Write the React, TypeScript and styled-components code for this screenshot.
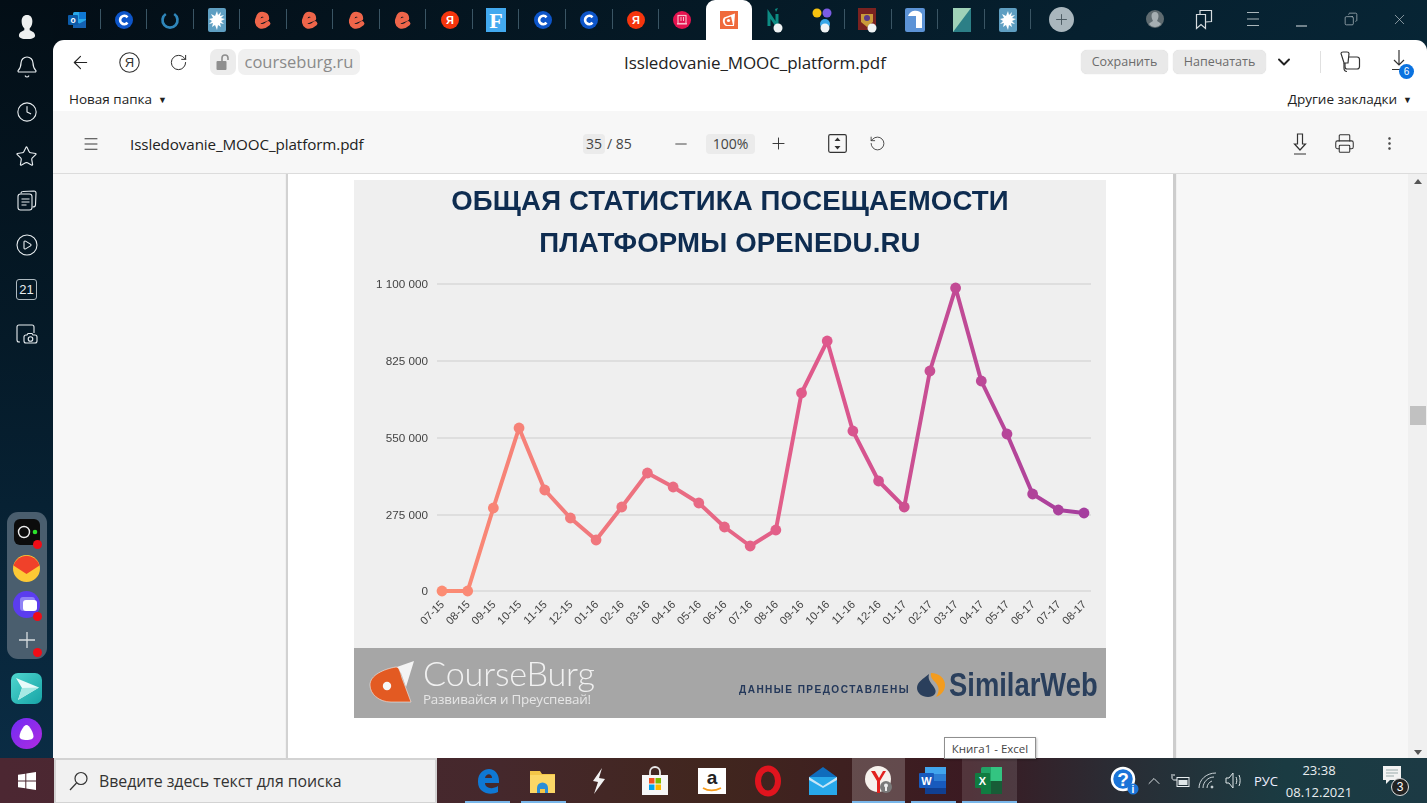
import React from "react";
import styled, { createGlobalStyle } from "styled-components";
import {
  ArrowLeft, Bell, ChevronDown, ChevronUp, CirclePlay, Clock, Copy, Menu, Minus, MoreVertical,
  Plus, Printer, RotateCcw, RotateCw, Star, X,
} from "lucide-react";

const Global = createGlobalStyle`
  html, body { margin: 0; padding: 0; width: 1427px; height: 803px; overflow: hidden; }
  body { font-family: "Open Sans", "Noto Sans", "Liberation Sans", sans-serif; color: #222; }
  svg { display: block; flex: none; overflow: visible; }
`;

const Desktop = styled.div`
  position: relative; width: 1427px; height: 803px; display: flex; flex-direction: column; overflow: hidden;
`;
const Upper = styled.div`
  height: 758px; flex: none; display: flex;
  background: linear-gradient(145deg, #030d15 0%, #06202f 45%, #0b3446 100%);
`;
const Sidebar = styled.aside`
  width: 53px; flex: none; display: flex; flex-direction: column; align-items: center;
  padding-top: 7px; box-sizing: border-box; color: #e8edf0;
  background: linear-gradient(180deg, #030e16 0%, #051a28 45%, #0a2c44 100%);
`;
const Avatar = styled.div`height: 38px; padding-top: 2px; box-sizing: border-box; display: flex; align-items: center; justify-content: center;`;
const RailButton = styled.div`
  width: 53px; height: 44.5px; flex: none; display: flex; align-items: center; justify-content: center;
`;
const RailDate = styled.div`
  width: 19px; height: 19px; border: 1px solid #aeb9c0; border-radius: 3px;
  font-size: 13px; line-height: 19px; text-align: center; color: #e8edf0; font-family: "Liberation Sans", sans-serif;
`;
const RailPanel = styled.div`
  margin-top: auto; width: 40px; height: 147px; box-sizing: border-box; border-radius: 11px; background: #4a5e6e;
  display: flex; flex-direction: column; align-items: center; padding-top: 2px;
`;
const PanelItem = styled.div`
  position: relative; width: 27px; height: 36px; display: flex; align-items: center; justify-content: center;
`;
const RedDot = styled.span`
  position: absolute; right: -2px; bottom: 1px; width: 9px; height: 9px; border-radius: 50%; background: #f00d17;
`;
const RailApp = styled.div<{ $gap: number }>`margin-top: ${p => p.$gap}px;`;
const RailFoot = styled.div`height: 9px; flex: none;`;

const Browser = styled.div`flex: 1; min-width: 0; display: flex; flex-direction: column;`;
const TabStrip = styled.div`height: 40px; flex: none; display: flex; align-items: stretch; padding-left: 1px;`;
const Tab = styled.div<{ $active?: boolean; $sep?: boolean }>`
  position: relative; width: 46.55px; flex: none; display: flex; align-items: center; justify-content: center;
  background: ${p => (p.$active ? "#fff" : "transparent")};
  border-radius: ${p => (p.$active ? "9px 9px 0 0" : "0")};
  &::after {
    content: ""; display: ${p => (p.$sep ? "block" : "none")};
    position: absolute; right: 0; top: 9px; bottom: 11px; width: 1px; background: #3a5564;
  }
`;
const AddTab = styled.div`
  margin-left: 18px; width: 25px; height: 25px; align-self: center; margin-top: -2px; border-radius: 50%;
  background: #a9b6bd; color: #45545c; display: flex; align-items: center; justify-content: center;
`;
const WindowControls = styled.div`
  margin-left: auto; display: flex; align-items: center; color: #c9d2d6; padding: 0 3px 2px 0;
`;
const Control = styled.div`
  width: 49px; display: flex; align-items: center; justify-content: center;
`;
const Window = styled.div`
  flex: 1; min-height: 0; display: flex; flex-direction: column; background: #fff; border-radius: 11px 11px 0 0; overflow: hidden;
`;
const NavBar = styled.div`
  height: 44px; flex: none; display: flex; align-items: center; position: relative; color: #222; padding-left: 17px;
`;
const NavIcon = styled.div<{ $w?: number }>`
  width: ${p => p.$w ?? 49}px; flex: none; display: flex; align-items: center; justify-content: center;
`;
const LockChip = styled.div`
  margin-left: 22px; width: 26px; height: 26px; border-radius: 7px; background: #ececec; display: flex; align-items: center; justify-content: center;
`;
const UrlChip = styled.div`
  margin-left: 2px; width: 122px; height: 26px; border-radius: 7px; background: #f0f0f0; color: #8a8a8a;
  font-size: 16.5px; line-height: 26px; text-align: center; white-space: nowrap;
`;
const PageTitle = styled.div`
  margin-left: 264px; font-size: 17px; letter-spacing: -0.1px; color: #222; white-space: nowrap; width: 457px;
`;
const ActionChip = styled.div<{ $w: number }>`
  width: ${p => p.$w}px; height: 24px; margin-right: 5px; flex: none; border-radius: 6px; background: #e9e9e9; color: #6b6b6b;
  font-size: 12.5px; line-height: 24px; text-align: center; box-shadow: 0 0 1px #ccc;
`;
const NavDivider = styled.div`width: 1px; height: 22px; background: #e0e0e0; margin: 0 18px 0 27px;`;
const BadgeWrap = styled.div`position: relative; margin-left: 30px; width: 20px; height: 26px;`;
const CountBadge = styled.span`
  position: absolute; left: 8px; top: 15px; width: 15px; height: 15px; border-radius: 50%; background: #0a72e0; color: #fff;
  font-size: 10px; line-height: 15px; text-align: center; font-family: "Liberation Sans", sans-serif;
`;
const BookmarkBar = styled.div`
  height: 27px; flex: none; display: flex; align-items: center; justify-content: space-between; padding: 3px 15px 0 16px;
  box-sizing: border-box; font-size: 13.5px; color: #222;
`;
const Caret = styled.span`font-size: 9px; margin-left: 6px; position: relative; top: -1px;`;

const PdfBar = styled.div`
  height: 63px; flex: none; box-sizing: border-box; background: #f7f7f7; border-bottom: 1px solid #dcdcdc;
  display: flex; align-items: center; color: #333; padding: 3px 0 0 29px;
`;
const PdfName = styled.div`
  margin-left: 30px; width: 453px; flex: none; font-size: 15.2px; font-weight: 500; color: #222; white-space: nowrap; letter-spacing: -0.1px;
`;
const PageField = styled.span`
  display: inline-block; width: 22px; height: 20px; line-height: 20px; background: #ebebeb; border-radius: 4px; text-align: center; font-size: 14px; color: #444;
`;
const PageCount = styled.div`
  width: 89px; flex: none; display: flex; align-items: center; font-size: 14px; color: #444; gap: 2px;
`;
const ZoomField = styled.div`
  margin: 0 14px 0 16px; width: 49px; height: 20px; line-height: 20px; background: #ebebeb; border-radius: 4px; text-align: center; font-size: 14px; color: #444;
`;
const PdfIcon = styled.div<{ $ml?: number; $w?: number }>`
  margin-left: ${p => p.$ml ?? 0}px; width: ${p => p.$w ?? 18}px; flex: none; display: flex; align-items: center; justify-content: center; color: #333;
`;

const Canvas = styled.div`flex: 1; min-height: 0; display: flex; background: #f7f7f7; overflow: hidden;`;
const Sheet = styled.div`
  margin-left: 235px; width: 885px; flex: none; box-sizing: border-box; background: #fff; padding: 6px 0 0 66px;
  box-shadow: -2px 0 1px #d2d2d2, 3px 0 1px #cdcdcd;
`;
const Figure = styled.figure`
  margin: 0; width: 752px; height: 538px; display: flex; flex-direction: column; background: #efefef; filter: blur(0.35px);
`;
const FigureTitle = styled.div`
  height: 84px; flex: none; font: bold 27.6px/42px "Liberation Sans", Arial, sans-serif; color: #0e2c50; text-align: center; letter-spacing: 0.15px;
`;
const ChartSvg = styled.svg`width: 752px; height: 384px;`;
const FigureBand = styled.div`
  height: 70px; flex: none; background: #a6a6a6; display: flex; align-items: center; padding: 0 8px 0 15px; box-sizing: border-box;
`;
const BrandText = styled.div`margin: -4px 0 0 9px; color: #f1f1f1; width: 316px; flex: none;`;
const BrandName = styled.div`font: 300 34.2px/34px Lato, "Open Sans", sans-serif; letter-spacing: -0.15px;`;
const BrandTag = styled.div`font: 13.4px/15px "Open Sans", sans-serif; color: #e6e6e6; margin-top: 2px; letter-spacing: -0.2px; white-space: nowrap;`;
const Credit = styled.div`
  font: bold 10.1px "Liberation Sans", sans-serif; letter-spacing: 1.45px; color: #24385a; white-space: nowrap; margin-top: 13px; width: 178px; flex: none;
`;
const SimilarName = styled.div`
  margin: 3px 0 0 3px; width: 150px; flex: none; font: bold 33px/34px "Liberation Sans", sans-serif; color: #2a3f5c; white-space: nowrap;
  transform: scaleX(0.83); transform-origin: left center;
`;

const Scrollbar = styled.div`
  margin-left: auto; width: 19px; flex: none; background: #f0f0f0; display: flex; flex-direction: column; align-items: center;
  box-sizing: border-box; padding: 5px 0 3px;
`;
const ScrollArrow = styled.div<{ $down?: boolean }>`
  width: 0; height: 0; border-left: 4.5px solid transparent; border-right: 4.5px solid transparent;
  ${p => (p.$down ? "border-top: 5px solid #555;" : "border-bottom: 5px solid #555;")}
`;
const ScrollThumb = styled.div`margin-top: 222px; margin-bottom: auto; width: 16px; height: 19px; background: #c1c1c1;`;

const Taskbar = styled.div`
  height: 45px; flex: none; display: flex; align-items: stretch; color: #fff;
  background: linear-gradient(90deg, #4c2732 0%, #45282c 35%, #41261e 50%, #3b1a22 68%, #2a2c34 78%, #1a3b42 90%, #1c3a44 100%);
`;
const StartButton = styled.div`width: 54px; flex: none; display: flex; align-items: center; justify-content: center;`;
const SearchBox = styled.div`
  width: 383px; flex: none; box-sizing: border-box; background: #f1f1f1; border: 2px solid #d3d3d3; border-bottom-width: 1px;
  display: flex; align-items: center; color: #333; font-size: 15.9px; padding-left: 13px; gap: 11px; letter-spacing: -0.05px;
`;
const AppSlot = styled.div<{ $w: number; $ml?: number; $running?: boolean; $tone?: number }>`
  position: relative; width: ${p => p.$w}px; margin-left: ${p => p.$ml ?? 0}px; flex: none; display: flex; align-items: center; justify-content: center;
  background: ${p => (p.$tone ? `rgba(255,255,255,${p.$tone})` : "transparent")};
  &::after {
    content: ""; display: ${p => (p.$running ? "block" : "none")};
    position: absolute; left: 0; right: 0; bottom: 0; height: 2px; background: #79b7ea;
  }
`;
const Tray = styled.div`
  margin-left: auto; display: flex; align-items: center; color: #e8eef0; padding-right: 20px;
`;
const TrayItem = styled.div<{ $w: number }>`width: ${p => p.$w}px; flex: none; display: flex; align-items: center; justify-content: center;`;
const Lang = styled.div`width: 38px; font-size: 13px; text-align: center; color: #eef;`;
const ClockBox = styled.div`width: 68px; text-align: center; font-size: 13px; line-height: 22px; padding-top: 1px; color: #eaeef0;`;
const NotifBox = styled.div`position: relative; margin-left: 30px; width: 24px; height: 30px;`;
const NotifCount = styled.span`
  position: absolute; left: 8px; top: 12px; width: 16px; height: 16px; border-radius: 50%; background: #222; border: 1px solid #ddd; color: #fff;
  font-size: 12px; line-height: 16px; text-align: center; font-family: "Liberation Sans", sans-serif;
`;
const Tooltip = styled.div`
  position: absolute; left: 944px; top: 737px; width: 92px; height: 22px; box-sizing: border-box; background: #fff; border: 1px solid #8f8f8f;
  font-size: 11.5px; line-height: 21px; text-align: center; color: #444; box-shadow: 1px 1px 2px rgba(0,0,0,.25); white-space: nowrap;
`;

/* ---------- favicons ---------- */
const LETTER = { fontFamily: "Liberation Sans, sans-serif", fontWeight: 700 } as const;
const Splat = () => (
  <svg width="18" height="24" viewBox="0 0 18 24">
    <rect width="18" height="24" rx="2" fill="#5f9fc2" />
    <path d="M9 3l1 4 3-3-1 4 4-1-3 3 4 1-4 2 3 3-4-1 1 4-3-2-1 5-2-5-3 2 1-4-4 1 3-3-3-2 4-1-2-4 4 2z" fill="#fff" />
  </svg>
);
const Letter = ({ bg, ch, size = 12 }: { bg: string; ch: string; size?: number }) => (
  <svg width="18" height="18" viewBox="0 0 18 18">
    <circle cx="9" cy="9" r="9" fill={bg} />
    <text x="9" y={9 + size * 0.36} textAnchor="middle" fontSize={size} fill="#fff" style={LETTER}>{ch}</text>
  </svg>
);
const CourseraC = () => (
  <svg width="18" height="18" viewBox="0 0 18 18">
    <circle cx="9" cy="9" r="9" fill="#0d55c9" />
    <path d="M12.5 6.3A4.2 4.2 0 1 0 12.5 11.7" fill="none" stroke="#fff" strokeWidth="2.6" />
  </svg>
);
const E = () => (
  <svg width="18" height="18" viewBox="0 0 18 18">
    <path d="M4 11 12.800 7.500A4.300 4.300 0 0 0 4.500 6C2.500 10 3 13.500 6 15c2.500 1 5 .2 8-2.500" fill="none" stroke="#ee654a" strokeWidth="4.800" strokeLinecap="round" strokeLinejoin="round" />
  </svg>
);
const WithDot = ({ children }: { children: React.ReactNode }) => (
  <svg width="24" height="28" viewBox="0 0 24 28">
    {children}
    <circle cx="15" cy="22" r="4.5" fill="#f0f4f5" />
  </svg>
);
const favicons: Record<string, React.ReactNode> = {
  outlook: (
    <svg width="18" height="16" viewBox="0 0 18 16">
      <rect x="5" y="0" width="13" height="16" rx="1.5" fill="#28a8ea" />
      <rect x="11" y="0" width="7" height="7" fill="#0f78d4" />
      <path d="M5 8l6.500 3.500L18 8v8H5z" fill="#1460b0" />
      <rect y="3" width="10" height="10" rx="1" fill="#0b5aa8" />
      <text x="5" y="11" textAnchor="middle" fontSize="8.5" fill="#fff" style={LETTER}>o</text>
    </svg>
  ),
  c: <CourseraC />,
  u: (
    <svg width="18" height="18" viewBox="0 0 18 18">
      <path d="M4.800 3A7.500 7.500 0 1 0 13.200 3" fill="none" stroke="#2f86ba" strokeWidth="2.700" />
    </svg>
  ),
  splat: <Splat />,
  e: <E />,
  ya: <Letter bg="#f5350d" ch="Я" size={11} />,
  f: (
    <svg width="20" height="24" viewBox="0 0 20 24">
      <rect width="20" height="24" fill="#42a9ef" />
      <text x="10" y="20" textAnchor="middle" fontSize="22" fill="#fff" style={{ fontFamily: "Liberation Serif, serif", fontWeight: 700 }}>F</text>
    </svg>
  ),
  ru: (
    <svg width="18" height="18" viewBox="0 0 18 18">
      <circle cx="9" cy="9" r="9" fill="#e5124f" />
      <rect x="5" y="4.500" width="8" height="8" fill="none" stroke="#f7b9c8" strokeWidth="1.2" />
      <rect x="4" y="12" width="10" height="1.500" fill="#f7b9c8" />
      <path d="M8 6v4M10.500 6v4" stroke="#f7b9c8" />
    </svg>
  ),
  active: (
    <svg width="18" height="18" viewBox="0 0 18 18">
      <rect width="18" height="18" fill="#ef6a3c" />
      <path d="M15 2.500 4 6.500C2 9 2.500 13 6 15h8z" fill="#fff" />
      <path d="M5.500 7.500 11 5.500 13 14H7C5 13 4 10 5.500 7.500z" fill="#ef6a3c" />
      <circle cx="8.500" cy="9.500" r="1.600" fill="#fff" />
    </svg>
  ),
  n: (
    <WithDot>
      <path d="M6 20V8l8 12V8" fill="none" stroke="#0d8c84" strokeWidth="3" />
      <path d="M12 3l3-1-2 4z" fill="#0d8c84" />
    </WithDot>
  ),
  dots: (
    <WithDot>
      <circle cx="7" cy="7" r="4.500" fill="#f6c20f" />
      <circle cx="17" cy="7" r="4.500" fill="#7b5ce4" />
      <circle cx="15" cy="18" r="5" fill="#37a7e8" />
    </WithDot>
  ),
  crest: (
    <WithDot>
      <rect x="1" y="2" width="18" height="22" fill="#7a2220" />
      <path d="M4 8h12v8l-6 5-6-5z" fill="#c99a3a" />
      <circle cx="10" cy="12" r="3" fill="#5b3a8a" />
    </WithDot>
  ),
  one: (
    <svg width="20" height="24" viewBox="0 0 20 24">
      <rect width="20" height="24" rx="2" fill="#5c93d6" />
      <path d="M3 8A8 8 0 0 1 17 6v14H11V8H8z" fill="#fff" />
    </svg>
  ),
  tri: (
    <svg width="18" height="24" viewBox="0 0 18 24">
      <rect width="18" height="24" fill="#2c7f86" />
      <path d="M0 0h18L0 24z" fill="#9fd2b8" />
    </svg>
  ),
};
const tabs = ["outlook", "c", "u", "splat", "e", "e", "e", "e", "ya", "f", "c", "c", "ya", "ru", "active", "n", "dots", "crest", "one", "tri", "splat"];

/* ---------- chart ---------- */
const yTicks = [["1 100 000", 284], ["825 000", 361], ["550 000", 438], ["275 000", 515], ["0", 591]] as const;
const months = ["07-15","08-15","09-15","10-15","11-15","12-15","01-16","02-16","03-16","04-16","05-16","06-16","07-16","08-16","09-16","10-16","11-16","12-16","01-17","02-17","03-17","04-17","05-17","06-17","07-17","08-17"];
const values = [591,591,508,428,490,518,540,507,473,487,503,527,546,530,393,341,431,481,507,371,288,381,434,494,510,513];
const xAt = (i: number) => 442 + (i * 642) / 25;
const mix = (t: number) => {
  const a = [252, 140, 115], m = [222, 88, 140], b = [165, 62, 158];
  const [p, q, k] = t < 0.6 ? [a, m, t / 0.6] : [m, b, (t - 0.6) / 0.4];
  return `rgb(${p.map((v, i) => Math.round(v + (q[i] - v) * k)).join(",")})`;
};

const Chart = () => (
  <ChartSvg viewBox="354 264 752 384">
    <defs>
      <linearGradient id="trend" gradientUnits="userSpaceOnUse" x1="442" y1="0" x2="1084" y2="0">
        <stop offset="0" stopColor={mix(0)} />
        <stop offset="0.6" stopColor={mix(0.6)} />
        <stop offset="1" stopColor={mix(1)} />
      </linearGradient>
    </defs>
    {yTicks.map(([label, y]) => (
      <g key={label}>
        <line x1="437" x2="1091" y1={y} y2={y} stroke="#d9d9d9" strokeWidth="1.400" />
        <text x="428" y={y + 4} textAnchor="end" fontSize="11.700" fill="#444" fontFamily="Liberation Sans, sans-serif">{label}</text>
      </g>
    ))}
    <polyline points={values.map((v, i) => `${xAt(i)},${v}`).join(" ")} fill="none" stroke="url(#trend)" strokeWidth="4" strokeLinejoin="round" />
    {values.map((v, i) => (
      <circle key={i} cx={xAt(i)} cy={v} r="5.400" fill={mix(i / 25)} />
    ))}
    {months.map((m, i) => (
      <text key={m + i} transform={`translate(${xAt(i) + 3} 605) rotate(-45)`} textAnchor="end" fontSize="11.200" fill="#444" fontFamily="Liberation Sans, sans-serif">{m}</text>
    ))}
  </ChartSvg>
);

const App = () => (
  <Desktop>
    <Global />
    <Upper>
      <Sidebar>
        <Avatar>
          <svg width="20" height="26" viewBox="0 0 20 29">
            <path d="M10 1c4 0 6 3 6 7 0 3-1 6-3 8v2c2 1 6 2 6 6 0 3-4 4-9 4s-9-1-9-4c0-4 4-5 6-6v-2C5 14 4 11 4 8c0-4 2-7 6-7z" fill="#eef0f0" />
          </svg>
        </Avatar>
        <RailButton><Bell size={24} strokeWidth={1.2} /></RailButton>
        <RailButton><Clock size={22} strokeWidth={1.2} /></RailButton>
        <RailButton><Star size={23} strokeWidth={1.2} /></RailButton>
        <RailButton>
          <svg width="20" height="21" viewBox="0 0 20 21" fill="none" stroke="#e8edf0" strokeWidth="1.100">
            <rect x="1" y="4" width="14" height="16" rx="2.500" />
            <path d="M4 3.500C4 2 5 1.500 6 1.500L17 1c1.500 0 2 1 2 2l-.5 12c0 1-1 2-3 2" />
            <path d="M4.500 9h8M4.500 12h8M4.500 15h5" />
          </svg>
        </RailButton>
        <RailButton><CirclePlay size={24} strokeWidth={1.1} /></RailButton>
        <RailButton><RailDate>21</RailDate></RailButton>
        <RailButton>
          <svg width="22" height="20" viewBox="0 0 22 20" fill="none" stroke="#e8edf0" strokeWidth="1.100">
            <path d="M4 18H3c-1 0-2-1-2-2V3c0-1 1-2 2-2h13c1 0 2 1 2 2v6" />
            <path d="M8 13c0-1 1-2 2-2h1l1-1.500h4L17 11h2c1 0 2 1 2 2v4c0 1-1 2-2 2H10c-1 0-2-1-2-2z" />
            <circle cx="14.500" cy="15" r="2.300" />
          </svg>
        </RailButton>
        <RailPanel>
          <PanelItem>
            <svg width="26" height="26" viewBox="0 0 26 26">
              <rect width="26" height="26" rx="6" fill="#0c0c0c" />
              <circle cx="10" cy="13" r="5.500" fill="none" stroke="#eee" strokeWidth="1.400" />
              <circle cx="21" cy="13" r="2.300" fill="#2be32b" />
            </svg>
            <RedDot />
          </PanelItem>
          <PanelItem>
            <svg width="27" height="27" viewBox="0 0 27 27">
              <circle cx="13.500" cy="13.500" r="13.500" fill="#fdc935" />
              <path d="M.500 10.500A13.500 13.500 0 0 1 26.500 10.500L13.500 19z" fill="#f0412a" />
            </svg>
          </PanelItem>
          <PanelItem>
            <svg width="27" height="27" viewBox="0 0 27 27">
              <circle cx="13.500" cy="13.500" r="13.500" fill="#5b3dee" />
              <rect x="7" y="6" width="15" height="14" rx="3" fill="#8f82f5" />
              <rect x="10" y="9" width="14" height="11" rx="3" fill="#fff" />
            </svg>
            <RedDot />
          </PanelItem>
          <PanelItem>
            <svg width="18" height="18" viewBox="0 0 18 18"><path d="M9 1v16M1 9h16" stroke="#d8dde0" strokeWidth="1.300" /></svg>
            <RedDot />
          </PanelItem>
        </RailPanel>
        <RailApp $gap={14}>
          <svg width="31" height="31" viewBox="0 0 31 31">
            <defs>
              <linearGradient id="tg" x1="0" y1="0" x2="1" y2="1"><stop offset="0" stopColor="#4fd6cf" /><stop offset="1" stopColor="#17a4a6" /></linearGradient>
            </defs>
            <rect width="31" height="31" rx="7" fill="url(#tg)" />
            <path d="M5 5l23 9.500L7 27l4-12z" fill="#e9fbfa" />
            <path d="M11 15l17-.5L7 27z" fill="#a6e9e4" />
          </svg>
        </RailApp>
        <RailApp $gap={14}>
          <svg width="31" height="31" viewBox="0 0 31 31">
            <defs>
              <linearGradient id="al" x1="0" y1="0" x2="1" y2="1"><stop offset="0" stopColor="#6f2cf5" /><stop offset="1" stopColor="#b02be0" /></linearGradient>
            </defs>
            <circle cx="15.500" cy="15.500" r="15.500" fill="url(#al)" />
            <path d="M15.500 7c3 0 7 8 7 11.500 0 2.500-3 3.500-7 3.500s-7-1-7-3.500C8.500 15 12.500 7 15.500 7z" fill="#fff" />
          </svg>
        </RailApp>
        <RailFoot />
      </Sidebar>
      <Browser>
        <TabStrip>
          {tabs.map((k, i) => (
            <Tab key={i} $active={k === "active"} $sep={k !== "active" && i !== 13 && i !== 15}>{favicons[k]}</Tab>
          ))}
          <AddTab><Plus size={17} strokeWidth={1.300} /></AddTab>
          <WindowControls>
            <Control>
              <svg width="18" height="22" viewBox="0 0 18 22">
                <circle cx="9" cy="11" r="9" fill="#5f6b70" />
                <path d="M9 4c2.500 0 3.500 2 3.500 4S11.500 12 11 13c1 .8 3 1.500 4 3-1.500 2-3.500 3-6 3s-4.500-1-6-3c1-1.500 3-2.200 4-3-.5-1-1.500-3-1.500-5S6.500 4 9 4z" fill="#a5aeb2" />
              </svg>
            </Control>
            <Control>
              <svg width="18" height="22" viewBox="0 0 18 22" fill="none" stroke="#d6dcdf" strokeWidth="1.200">
                <path d="M1.500 6.500h9v14l-4.500-4-4.500 4z" />
                <path d="M5 6V2.500h11.500v11l-6 .5" />
              </svg>
            </Control>
            <Control>
              <svg width="14" height="16" viewBox="0 0 14 16"><path d="M1 1.500h12M1 8h12M1 14.500h12" stroke="#aab6bb" /></svg>
            </Control>
            <Control><svg width="13" height="16" viewBox="0 0 13 16"><path d="M1 15h11" stroke="#c9d2d6" strokeWidth="1.100" /></svg></Control>
            <Control><Copy size={14} strokeWidth={1.100} style={{ transform: "scaleX(-1)" }} /></Control>
            <Control><X size={17} strokeWidth={0.9} /></Control>
          </WindowControls>
        </TabStrip>
        <Window>
          <NavBar>
            <NavIcon $w={20}><ArrowLeft size={21} strokeWidth={1.300} /></NavIcon>
            <NavIcon $w={78}>
              <svg width="21" height="21" viewBox="0 0 21 21">
                <circle cx="10.500" cy="10.500" r="9.700" fill="none" stroke="#333" strokeWidth="1.100" />
                <text x="10.500" y="15" textAnchor="middle" fontSize="13" fill="#333" fontFamily="Liberation Sans, sans-serif">Я</text>
              </svg>
            </NavIcon>
            <NavIcon $w={20}><RotateCw size={19} strokeWidth={1.200} /></NavIcon>
            <LockChip>
              <svg width="14" height="17" viewBox="0 0 14 17">
                <rect x="0.500" y="7" width="10" height="9" rx="1" fill="#8e8e8e" />
                <path d="M6 7V4a3 3 0 0 1 6 0v2" fill="none" stroke="#8e8e8e" strokeWidth="1.600" />
              </svg>
            </LockChip>
            <UrlChip>courseburg.ru</UrlChip>
            <PageTitle>Issledovanie_MOOC_platform.pdf</PageTitle>
            <ActionChip $w={87}>Сохранить</ActionChip>
            <ActionChip $w={93}>Напечатать</ActionChip>
            <NavIcon $w={18} style={{ marginLeft: 4 }}><ChevronDown size={20} strokeWidth={2.300} /></NavIcon>
            <NavDivider />
            <NavIcon $w={22}>
              <svg width="22" height="22" viewBox="0 0 22 22" fill="none" stroke="#333" strokeWidth="1.200">
                <path d="M2 2.500c0-1 1-1.500 2-1.500h4c1 0 2 .5 2 1.500L9 12H5z" />
                <path d="M10 6h8c1.500 0 2.500 1 2.500 2.500v7c0 1.500-1 2.500-2.500 2.500H8c-1.500 0-2-1-2-2.500V12" />
                <path d="M5 12v5c0 2 1 3.500 3 3.500" />
              </svg>
            </NavIcon>
            <BadgeWrap>
              <svg width="16" height="22" viewBox="0 0 16 22" fill="none" stroke="#333" strokeWidth="1.200">
                <path d="M8 1v15M3 11l5 5 5-5M1 20.500h14" />
              </svg>
              <CountBadge>6</CountBadge>
            </BadgeWrap>
          </NavBar>
          <BookmarkBar>
            <span>Новая папка<Caret>▼</Caret></span>
            <span>Другие закладки<Caret>▼</Caret></span>
          </BookmarkBar>
          <PdfBar>
            <Menu size={18} strokeWidth={1.300} />
            <PdfName>Issledovanie_MOOC_platform.pdf</PdfName>
            <PageCount><PageField>35</PageField><span>/ 85</span></PageCount>
            <PdfIcon $w={18} ><Minus size={18} strokeWidth={1.200} /></PdfIcon>
            <ZoomField>100%</ZoomField>
            <PdfIcon><Plus size={19} strokeWidth={1.200} /></PdfIcon>
            <PdfIcon $ml={41}>
              <svg width="19" height="19" viewBox="0 0 19 19">
                <rect x="0.700" y="0.700" width="17.600" height="17.600" rx="1.500" fill="none" stroke="#333" strokeWidth="1.200" />
                <path d="M9.500 3.500l3 3.500h-6zM9.500 15.500l3-3.500h-6z" fill="#333" />
              </svg>
            </PdfIcon>
            <PdfIcon $ml={22}><RotateCcw size={17} strokeWidth={1.200} /></PdfIcon>
            <PdfIcon $ml={405}>
              <svg width="16" height="22" viewBox="0 0 16 22" fill="none" stroke="#333" strokeWidth="1.200">
                <path d="M5.500 1h5v10h3L8 17 2.500 11h3zM2 21h12" />
              </svg>
            </PdfIcon>
            <PdfIcon $ml={26}><Printer size={21} strokeWidth={1.200} /></PdfIcon>
            <PdfIcon $ml={27}><MoreVertical size={17} strokeWidth={1.500} /></PdfIcon>
          </PdfBar>
          <Canvas>
            <Sheet>
              <Figure>
                <FigureTitle>ОБЩАЯ СТАТИСТИКА ПОСЕЩАЕМОСТИ<br />ПЛАТФОРМЫ OPENEDU.RU</FigureTitle>
                <Chart />
                <FigureBand>
                  <svg width="45" height="46" viewBox="0 0 45 46">
                    <path d="M25 8 45 1 37 27 32 13z" fill="#f4f4f4" />
                    <path d="M27 7C15 9 1 15 1 25c0 9 9 17 21 17h20L33 18c-2-7-3-11-6-11z" fill="#e35a22" stroke="#f0f0f0" strokeWidth="0.600" />
                    <circle cx="18" cy="26" r="4.200" fill="#f6f6f6" />
                  </svg>
                  <BrandText>
                    <BrandName>CourseBurg</BrandName>
                    <BrandTag>Развивайся и Преуспевай!</BrandTag>
                  </BrandText>
                  <Credit>ДАННЫЕ ПРЕДОСТАВЛЕНЫ</Credit>
                  <svg width="29" height="24" viewBox="0 0 29 24" style={{ marginTop: 3 }}>
                    <path d="M12 1C6 6 0 9 0 15c0 5 5 9 11 9 6 0 9-4 7-8-2-5-8-8-6-15z" fill="#2a3f5c" />
                    <path d="M14 0c8 0 14 5 14 12 0 6-4 10-9 12 4-6 3-10 0-14-3-3-6-6-5-10z" fill="#f39c1f" />
                  </svg>
                  <SimilarName>SimilarWeb</SimilarName>
                </FigureBand>
              </Figure>
            </Sheet>
            <Scrollbar>
              <ScrollArrow />
              <ScrollThumb />
              <ScrollArrow $down />
            </Scrollbar>
          </Canvas>
        </Window>
      </Browser>
    </Upper>
    <Taskbar>
      <StartButton>
        <svg width="18" height="18" viewBox="0 0 18 18" fill="#fff">
          <path d="M0 2.700 7.300 1.700V8.500H0zM8.300 1.500 18 0V8.500H8.300zM0 9.500H7.300V16.300L0 15.300zM8.300 9.500H18V18L8.300 16.500z" />
        </svg>
      </StartButton>
      <SearchBox>
        <svg width="19" height="20" viewBox="0 0 19 20" fill="none" stroke="#333" strokeWidth="1.200">
          <circle cx="12" cy="7.500" r="6" /><path d="M7.500 12 1 19" />
        </svg>
        <span>Введите здесь текст для поиска</span>
      </SearchBox>
      <AppSlot $w={45} $ml={28} $running>
        <svg width="24" height="26" viewBox="0 0 24 26">
          <path d="M2 13C2 5 8 1 13 1c6 0 10 5 10 12v2H9c0 5 7 7 13 3v6c-8 4-20 1-20-10zM9 10h7c0-5-6-5-7 0z" fill="#0f78d4" />
        </svg>
      </AppSlot>
      <AppSlot $w={45} $ml={11} $running>
        <svg width="25" height="24" viewBox="0 0 25 24" style={{ marginRight: 2 }}>
          <path d="M0 2h10l2 3h13v19H0z" fill="#f3c648" />
          <path d="M0 6h25v18H0z" fill="#fbd766" />
          <path d="M7 19a5.500 5.500 0 0 1 11 0v5H7z" fill="#2a8ed8" />
          <path d="M10 20h5v4h-5z" fill="#f3c648" />
        </svg>
      </AppSlot>
      <AppSlot $w={45} $ml={10}>
        <svg width="16" height="26" viewBox="0 0 16 26"><path d="M11 0 2 13l5 1-4 12 11-15-6-1z" fill="#f2f2f2" /></svg>
      </AppSlot>
      <AppSlot $w={45} $ml={11}>
        <svg width="26" height="28" viewBox="0 0 26 28">
          <path d="M8 9V5a5 5 0 0 1 10 0v4" fill="none" stroke="#e8e8e8" strokeWidth="1.800" />
          <rect y="8" width="26" height="20" fill="#f7f7f7" />
          <rect x="7" y="11" width="5.500" height="5.500" fill="#f25022" /><rect x="13.500" y="11" width="5.500" height="5.500" fill="#7fba00" />
          <rect x="7" y="17.500" width="5.500" height="5.500" fill="#00a4ef" /><rect x="13.500" y="17.500" width="5.500" height="5.500" fill="#ffb900" />
        </svg>
      </AppSlot>
      <AppSlot $w={45} $ml={12}>
        <svg width="28" height="26" viewBox="0 0 28 26">
          <rect width="28" height="26" fill="#fff" />
          <text x="14" y="16" textAnchor="middle" fontSize="19" fill="#222" style={LETTER}>a</text>
          <path d="M5 20c5 3 12 3 18 0" fill="none" stroke="#f79c1c" strokeWidth="1.800" />
        </svg>
      </AppSlot>
      <AppSlot $w={45} $ml={11}>
        <svg width="26" height="30" viewBox="0 0 26 30"><ellipse cx="13" cy="15" rx="10" ry="12.500" fill="none" stroke="#e0141e" strokeWidth="6" /></svg>
      </AppSlot>
      <AppSlot $w={45} $ml={10}>
        <svg width="28" height="28" viewBox="0 0 28 28">
          <path d="M14 0 28 10H0z" fill="#0f6cbd" />
          <rect y="10" width="28" height="18" fill="#28a8ea" />
          <path d="M0 10l14 9 14-9v3L14 21 0 13z" fill="#c8e6f8" />
        </svg>
      </AppSlot>
      <AppSlot $w={53} $ml={7} $running $tone={0.2}>
        <svg width="28" height="32" viewBox="0 0 28 32">
          <circle cx="13" cy="14" r="13" fill="#f6f1ec" />
          <path d="M6 6l6 10v12h3V16l6-10h-3l-4 7-4-7z" fill="#e2221e" />
          <circle cx="21" cy="22" r="6" fill="#7a7a7a" />
          <circle cx="21" cy="20.500" r="2" fill="#eee" /><rect x="20" y="22" width="2" height="4" fill="#eee" />
        </svg>
      </AppSlot>
      <AppSlot $w={45} $ml={6} $running>
        <svg width="27" height="27" viewBox="0 0 27 27" style={{ marginRight: 3 }}>
          <rect x="6" y="0" width="21" height="27" rx="1.500" fill="#2b7cd3" />
          <rect x="6" y="0" width="21" height="7" fill="#41a5ee" /><rect x="6" y="14" width="21" height="7" fill="#185abd" /><rect x="6" y="21" width="21" height="6" fill="#103f91" />
          <rect y="6" width="15" height="15" rx="1" fill="#185abd" />
          <text x="7.500" y="17.500" textAnchor="middle" fontSize="11" fill="#fff" style={LETTER}>W</text>
        </svg>
      </AppSlot>
      <AppSlot $w={55} $ml={6} $running $tone={0.12}>
        <svg width="27" height="27" viewBox="0 0 27 27" style={{ marginRight: 2 }}>
          <rect x="6" y="0" width="21" height="27" rx="1.500" fill="#21a366" />
          <rect x="16" y="0" width="11" height="14" fill="#33c481" /><rect x="6" y="14" width="10" height="13" fill="#107c41" /><rect x="16" y="14" width="11" height="13" fill="#185c37" />
          <rect y="6" width="15" height="15" rx="1" fill="#107c41" />
          <text x="7.500" y="17.500" textAnchor="middle" fontSize="11" fill="#fff" style={LETTER}>X</text>
        </svg>
      </AppSlot>
      <Tray>
        <TrayItem $w={32}>
          <svg width="28" height="29" viewBox="0 0 28 29">
            <circle cx="12" cy="13" r="11" fill="#1b74d8" stroke="#fff" strokeWidth="2.500" />
            <text x="12" y="20" textAnchor="middle" fontSize="19" fill="#fff" style={LETTER}>?</text>
            <circle cx="22" cy="23" r="5.500" fill="#1b74d8" />
            <text x="22" y="27" textAnchor="middle" fontSize="10" fill="#fff" style={LETTER}>i</text>
          </svg>
        </TrayItem>
        <TrayItem $w={26}><ChevronUp size={20} strokeWidth={1.100} /></TrayItem>
        <TrayItem $w={27}>
          <svg width="19" height="14" viewBox="0 0 19 14" fill="none" stroke="#e8eef0">
            <rect x="6" y="3.500" width="12" height="9" /><rect x="7.500" y="6" width="9" height="5" fill="#dfe6e8" stroke="none" />
            <path d="M1 1v3c0 1 1 2 2 2h3M3 0v2M1 0v1" />
          </svg>
        </TrayItem>
        <TrayItem $w={27}>
          <svg width="19" height="17" viewBox="0 0 19 17" fill="none" stroke="#c9d2d6">
            <path d="M1 16C1 8 8 1 18 1M5 16C5 10 10 5 16 5M9 16c0-3 2-6 5-7" /><circle cx="14" cy="15" r="1" fill="#e8eef0" />
          </svg>
        </TrayItem>
        <TrayItem $w={26}>
          <svg width="18" height="17" viewBox="0 0 18 17" fill="none" stroke="#dfe6e8">
            <path d="M1 6h3l4-5v15l-4-5H1zM11 5c1 2 1 5 0 7M14 3c1.500 3 1.500 8 0 11" />
          </svg>
        </TrayItem>
        <Lang>РУС</Lang>
        <ClockBox>23:38<br />08.12.2021</ClockBox>
        <NotifBox>
          <svg width="18" height="18" viewBox="0 0 18 18">
            <path d="M0 0h18v14H7l-4 4v-4H0z" fill="#f2f2f2" />
            <path d="M3 4h12M3 7h12M3 10h8" stroke="#9aa" />
          </svg>
          <NotifCount>3</NotifCount>
        </NotifBox>
      </Tray>
    </Taskbar>
    <Tooltip>Книга1 - Excel</Tooltip>
  </Desktop>
);

export default App;
